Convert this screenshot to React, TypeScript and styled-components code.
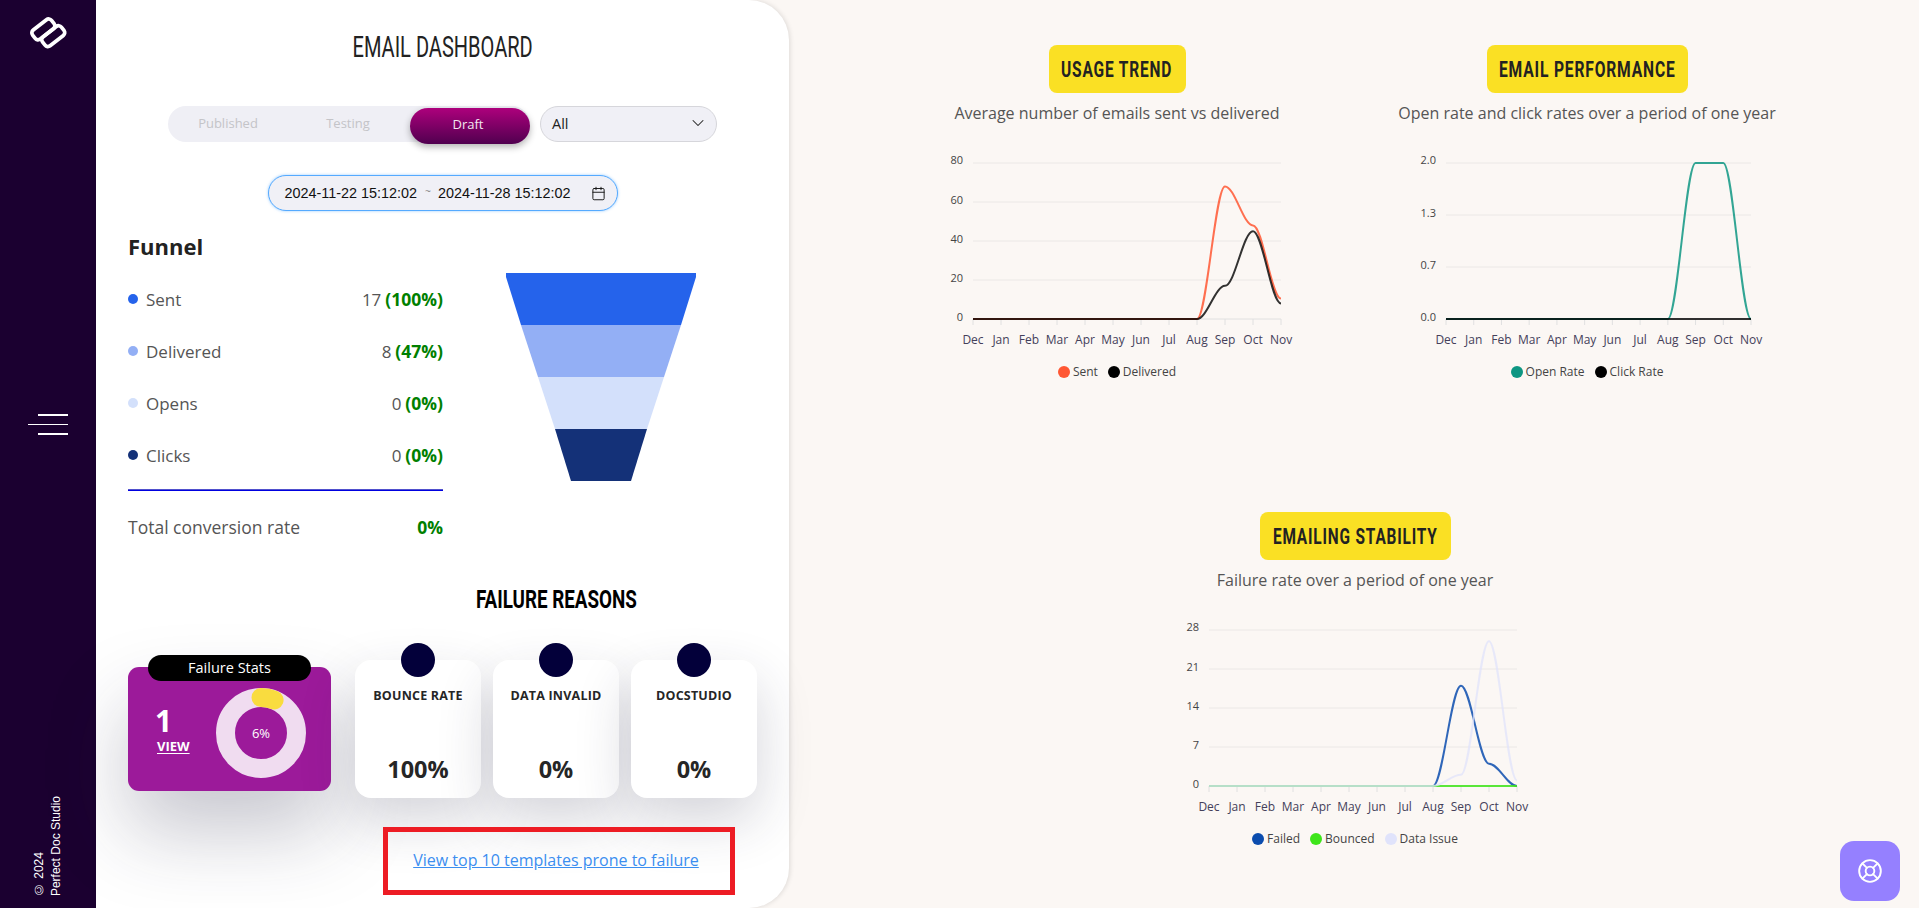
import React, { useLayoutEffect, useRef, useState } from "react";
import styled, { createGlobalStyle } from "styled-components";
import { ChevronDown, Calendar, LifeBuoy } from "lucide-react";

const Global = createGlobalStyle`
  html, body { margin: 0; padding: 0; height: 908px; overflow: hidden; background: #fbf7f4; }
  body { font-family: "Open Sans", "Noto Sans", sans-serif; color: #222; }
  * { box-sizing: border-box; }
`;

const Page = styled.div`
  display: flex;
  width: 1919px;
  height: 908px;
  overflow: hidden;
`;

const Sidebar = styled.aside`
  width: 96px;
  flex: none;
  background: #1b0030;
  display: flex;
  flex-direction: column;
  align-items: center;
  padding: 9px 0 12px;
`;

const Burger = styled.div`
  margin-top: 357px;
  width: 40px;
  display: flex;
  flex-direction: column;
  align-items: flex-end;
  gap: 8px;
`;

const BurgerBar = styled.span<{ $w: number }>`
  display: block;
  height: 1.5px;
  width: ${(p) => p.$w}px;
  background: #fff;
`;

const Copyright = styled.div`
  margin-top: auto;
  writing-mode: vertical-rl;
  transform: rotate(180deg);
  font: 12px/17px "Liberation Sans", Arial, sans-serif;
  color: #fff;
`;

const Panel = styled.section`
  width: 693px;
  flex: none;
  height: 908px;
  background: #fff;
  border-radius: 0 40px 40px 0;
  box-shadow: 1px 0 5px rgba(0, 0, 0, 0.12);
  padding: 28px 0 0 32px;
  position: relative;
`;

const Title = styled.h1`
  margin: 0 0 0 -32px;
  height: 36px;
  display: flex;
  justify-content: center;
  font: 400 29.5px/38px Roboto, sans-serif;
  color: #222;
`;

const FitSpan = styled.span`
  display: inline-block;
  flex: none;
  white-space: nowrap;
  transform-origin: center;
`;

/* Stands in for the condensed display face of the original: the text keeps its
   natural metrics and is narrowed to the width measured in the reference. */
function Condensed({ width, children }: { width: number; children: string }) {
  const ref = useRef<HTMLSpanElement>(null);
  const [scale, setScale] = useState(1);
  useLayoutEffect(() => {
    if (ref.current) setScale(width / ref.current.offsetWidth);
  }, [width]);
  return (
    <FitSpan ref={ref} style={{ transform: `scaleX(${scale})` }}>
      {children}
    </FitSpan>
  );
}

const StatusRow = styled.div`
  display: flex;
  justify-content: center;
  gap: 10px;
  margin: 42px 0 0 -32px;
`;

const Tabs = styled.div`
  display: flex;
  align-items: flex-start;
  height: 36px;
  background: #efeff5;
  border-radius: 18px;
`;

const Tab = styled.div<{ $active?: boolean }>`
  width: 120px;
  height: 36px;
  border-radius: 18px;
  font-size: 13px;
  line-height: 35px;
  text-align: center;
  color: ${(p) => (p.$active ? "#f3e6f0" : "#c4c4c8")};
  ${(p) =>
    p.$active &&
    `
    margin: 2px 0 0 2px;
    padding-right: 4px;
    line-height: 32px;
    font-weight: 500;
    background: linear-gradient(180deg, #ad007c 0%, #50004f 100%);
    box-shadow: 0 3px 7px rgba(0, 0, 0, 0.3);
  `}
`;

const SelectBox = styled.div`
  width: 177px;
  height: 36px;
  border: 1px solid #d6d6db;
  border-radius: 18px;
  background: #f0f0f6;
  padding: 0 8px 2px 11px;
  display: flex;
  align-items: center;
  justify-content: space-between;
  font-size: 14.5px;
  color: #222;
`;

const DatePill = styled.div`
  width: 350px;
  height: 36px;
  margin: 33px 0 0 140px;
  border: 1.5px solid #55aaff;
  border-radius: 18px;
  background: #f0f0f6;
  box-shadow: 0 0 3px rgba(85, 170, 255, 0.6);
  padding: 0 11px 0 15.5px;
  display: flex;
  align-items: center;
  font: 14.4px "Liberation Sans", Arial, sans-serif;
  color: #111;
`;

const Tilde = styled.span`
  color: #888;
  margin: -4px 7px 0 8px;
  font-size: 10px;
`;

const DateIcon = styled(Calendar)`
  margin-left: auto;
`;

const FunnelSection = styled.div`
  display: flex;
  gap: 56px;
  margin-top: 21px;
`;

const FunnelStats = styled.div`
  width: 315px;
`;

const Heading = styled.h2`
  margin: 0 0 13px;
  font: 700 22px/28px "Open Sans", sans-serif;
  color: #222;
`;

const StatRow = styled.div`
  height: 52px;
  display: flex;
  align-items: center;
  font-size: 17px;
  color: #555;
`;

const Dot = styled.span<{ $c: string }>`
  width: 10px;
  height: 10px;
  border-radius: 50%;
  background: ${(p) => p.$c};
  margin-right: 8px;
`;

const Count = styled.span`
  margin-left: auto;
  margin-right: 4px;
`;

const Pct = styled.b`
  color: #008000;
  font-size: 17.5px;
  font-weight: 700;
`;

const Divider = styled.hr`
  margin: 8px 0 0;
  border: 0;
  height: 2px;
  background: linear-gradient(180deg, #8a8ac0 0%, #0000e0 60%);
`;

const TotalRow = styled.div`
  margin-top: 24px;
  display: flex;
  justify-content: space-between;
  font-size: 17.5px;
  line-height: 24px;
  color: #555;
`;

const FunnelChart = styled.svg`
  margin-top: 41px;
  flex: none;
`;

const FailureGrid = styled.div`
  display: grid;
  grid-template-columns: 203px 402px;
  column-gap: 24px;
  margin-top: 45px;
`;

const FailureTitle = styled.h2`
  grid-column: 2;
  margin: 0 0 44px;
  height: 32px;
  display: flex;
  justify-content: center;
  font: 700 26.5px/30px Roboto, sans-serif;
  color: #000;
`;

const StatsCard = styled.div`
  grid-column: 1;
  grid-row: 2;
  position: relative;
  margin-top: 7px;
  height: 124px;
  border-radius: 11px;
  background: #9c1a9a;
  box-shadow: 0 40px 80px rgba(40, 40, 70, 0.26);
  display: flex;
  align-items: center;
  justify-content: space-between;
  padding: 8px 20px 0 29px;
  color: #fff;
`;

const StatsPill = styled.div`
  position: absolute;
  top: -12px;
  left: 20px;
  width: 163px;
  height: 26px;
  border-radius: 13px;
  background: #000;
  font-size: 14.5px;
  line-height: 26px;
  text-align: center;
`;

const StatsLeft = styled.div`
  display: flex;
  flex-direction: column;
  margin-top: -6px;
`;

const StatsNumber = styled.span`
  font-size: 30px;
  line-height: 30px;
  font-weight: 700;
  margin: 0 0 2px -2px;
`;

const ViewLink = styled.a`
  font-size: 13px;
  line-height: 17px;
  font-weight: 700;
  color: #fff;
  text-decoration: underline;
  text-underline-offset: 2px;
`;

const Reasons = styled.div`
  grid-column: 2;
  grid-row: 2;
  display: flex;
  gap: 12px;
`;

const ReasonCard = styled.div`
  position: relative;
  width: 126px;
  height: 138px;
  border-radius: 16px;
  background: #fff;
  box-shadow: 0 22px 55px rgba(40, 40, 70, 0.2);
  display: flex;
  flex-direction: column;
  align-items: center;
  justify-content: space-between;
  padding: 27px 0 13px;
  color: #262626;
`;

const ReasonDot = styled.span`
  position: absolute;
  top: -17px;
  left: 46px;
  width: 34px;
  height: 34px;
  border-radius: 50%;
  background: #03003a;
`;

const ReasonName = styled.span`
  font-size: 12.5px;
  line-height: 18px;
  font-weight: 700;
  letter-spacing: 0.2px;
`;

const ReasonValue = styled.span`
  font-size: 23.5px;
  line-height: 32px;
  font-weight: 700;
`;

const AnnotatedLink = styled.div`
  width: 352px;
  height: 68px;
  margin: 29px 0 0 255px;
  border: 5px solid #ed1c24;
  display: flex;
  align-items: center;
  justify-content: center;
  padding: 0 6px 2px 0;
  position: relative;
`;

const TemplateLink = styled.a`
  font-size: 16px;
  color: #3b8ef0;
  text-decoration: underline;
`;

const Charts = styled.main`
  flex: 1;
  display: grid;
  grid-template-columns: 470px 470px;
  grid-auto-rows: 467px;
  padding: 45px 0 0 93px;
`;

const ChartBlock = styled.div<{ $wide?: boolean }>`
  width: 470px;
  display: flex;
  flex-direction: column;
  align-items: center;
  ${(p) => p.$wide && `grid-column: 1 / -1; justify-self: center; margin-left: 6px;`}
`;

const Badge = styled.div<{ $w: number }>`
  height: 48px;
  width: ${(p) => p.$w}px;
  display: flex;
  justify-content: center;
  border-radius: 8px;
  background: #fae024;
  font: 700 22.5px/48px Roboto, sans-serif;
  letter-spacing: 1.2px;
  color: #222;
`;

const Subtitle = styled.p`
  margin: 9px 0 26px;
  font-size: 16px;
  line-height: 22px;
  color: #555;
`;

const ChartSvg = styled.svg`
  display: block;
  flex: none;
`;

const Legend = styled.div`
  margin-top: 11px;
  display: flex;
  gap: 10px;
  font-size: 12px;
  line-height: 18px;
  color: #444;
`;

const LegendItem = styled.span`
  display: flex;
  align-items: center;
  gap: 3px;
`;

const LegendDot = styled.span<{ $c: string }>`
  width: 12px;
  height: 12px;
  border-radius: 50%;
  background: ${(p) => p.$c};
`;

const HelpButton = styled.button`
  position: fixed;
  left: 1840px;
  top: 841px;
  width: 60px;
  height: 60px;
  border: 0;
  border-radius: 14px;
  background: #9580ff;
  display: flex;
  align-items: center;
  justify-content: center;
  color: #fff;
`;

const MONTHS = ["Dec", "Jan", "Feb", "Mar", "Apr", "May", "Jun", "Jul", "Aug", "Sep", "Oct", "Nov"];
const PLOT_TOP = 13;
const PLOT_BOTTOM = 169;

type Series = { name: string; color: string; lineOpacity?: number; data: number[] };
type ChartDef = {
  title: string;
  badgeWidth: number;
  textWidth: number;
  subtitle: string;
  left: number;
  width: number;
  max: number;
  ticks: string[];
  series: Series[];
  wide?: boolean;
};

const zeros = (n: number) => Array.from({ length: n }, () => 0);

const CHARTS: ChartDef[] = [
  {
    title: "USAGE TREND",
    badgeWidth: 137,
    textWidth: 111,
    subtitle: "Average number of emails sent vs delivered",
    left: 91,
    width: 308,
    max: 80,
    ticks: ["80", "60", "40", "20", "0"],
    series: [
      { name: "Sent", color: "#ff5733", lineOpacity: 0.85, data: [...zeros(9), 68, 48, 10.5] },
      { name: "Delivered", color: "#000000", lineOpacity: 0.8, data: [...zeros(9), 17, 45, 8] },
    ],
  },
  {
    title: "EMAIL PERFORMANCE",
    badgeWidth: 201,
    textWidth: 177,
    subtitle: "Open rate and click rates over a period of one year",
    left: 94,
    width: 305,
    max: 2,
    ticks: ["2.0", "1.3", "0.7", "0.0"],
    series: [
      { name: "Open Rate", color: "#0e9682", lineOpacity: 0.85, data: [...zeros(9), 2, 2, 0] },
      { name: "Click Rate", color: "#000000", lineOpacity: 0.8, data: zeros(12) },
    ],
  },
  {
    title: "EMAILING STABILITY",
    badgeWidth: 191,
    textWidth: 165,
    subtitle: "Failure rate over a period of one year",
    left: 89,
    width: 308,
    max: 28,
    ticks: ["28", "21", "14", "7", "0"],
    wide: true,
    series: [
      { name: "Failed", color: "#0b4cae", lineOpacity: 0.85, data: [...zeros(9), 18, 4, 0] },
      { name: "Bounced", color: "#3ee51a", lineOpacity: 0.85, data: zeros(12) },
      { name: "Data Issue", color: "#e0e3fb", lineOpacity: 0.75, data: [...zeros(9), 2, 26, 1] },
    ],
  },
];

function smoothPath(data: number[], left: number, width: number, max: number) {
  const step = width / (data.length - 1);
  const h = PLOT_BOTTOM - PLOT_TOP;
  const px = (i: number) => left + i * step;
  const py = (v: number) => PLOT_BOTTOM - (v / max) * h;
  let d = `M ${px(0)} ${py(data[0])}`;
  for (let i = 1; i < data.length; i++) {
    const c = step * 0.35;
    d += ` C ${px(i - 1) + c} ${py(data[i - 1])}, ${px(i) - c} ${py(data[i])}, ${px(i)} ${py(data[i])}`;
  }
  return d;
}

function LineChart({ def }: { def: ChartDef }) {
  const { left, width, max, ticks, series } = def;
  const step = width / 11;
  const rowGap = (PLOT_BOTTOM - PLOT_TOP) / (ticks.length - 1);
  return (
    <ChartSvg width={470} height={202} viewBox="0 0 470 202">
      {ticks.map((t, i) => {
        const y = PLOT_TOP + i * rowGap;
        return (
          <g key={t}>
            <line x1={left} x2={left + width} y1={y} y2={y} stroke={i === ticks.length - 1 ? "#e0e0e0" : "#ebe8e6"} />
            <text x={left - 10} y={i === 0 ? y + 1 : y + 2} textAnchor="end" fontSize="11" fontFamily="Open Sans" fill="#444">
              {t}
            </text>
          </g>
        );
      })}
      {MONTHS.map((m, i) => (
        <g key={m}>
          <line
            x1={left + i * step}
            x2={left + i * step}
            y1={PLOT_BOTTOM}
            y2={PLOT_BOTTOM + 6}
            stroke="#e0e0e0"
          />
          <text
            x={left + i * step}
            y={194}
            textAnchor="middle"
            fontSize="12"
            fontFamily="Open Sans"
            fill="#44405a"
          >
            {m}
          </text>
        </g>
      ))}
      {series.map((s) => (
        <path
          key={s.name}
          d={smoothPath(s.data, left, width, max)}
          fill="none"
          stroke={s.color}
          strokeOpacity={s.lineOpacity ?? 1}
          strokeWidth={2}
        />
      ))}
    </ChartSvg>
  );
}

const STATS = [
  { name: "Sent", color: "#2563eb", count: "17", pct: "(100%)" },
  { name: "Delivered", color: "#93aff5", count: "8", pct: "(47%)" },
  { name: "Opens", color: "#d3e0fb", count: "0", pct: "(0%)" },
  { name: "Clicks", color: "#143178", count: "0", pct: "(0%)" },
];

const REASONS = [
  { name: "BOUNCE RATE", value: "100%" },
  { name: "DATA INVALID", value: "0%" },
  { name: "DOCSTUDIO", value: "0%" },
];

function Logo() {
  return (
    <svg width="48" height="48" viewBox="0 0 40 40" fill="none" stroke="#fff" strokeWidth="3.1">
      <g transform="rotate(-38 20 20)">
        <rect x="8.8" y="10.5" width="20" height="9.5" rx="3" />
        <rect x="11.8" y="20" width="20" height="9.5" rx="3" />
      </g>
    </svg>
  );
}

function Donut() {
  const r = 35.5;
  const a = (21.6 * Math.PI) / 180;
  return (
    <svg width="100" height="100" viewBox="0 0 100 100">
      <circle cx="50" cy="50" r={r} fill="none" stroke="#f0dcf0" strokeWidth="19" />
      <path
        d={`M 50 ${50 - r} A ${r} ${r} 0 0 1 ${50 + r * Math.sin(a)} ${50 - r * Math.cos(a)}`}
        fill="none"
        stroke="#f9dc3f"
        strokeWidth="19"
        strokeLinecap="round"
      />
      <text x="50" y="54.5" textAnchor="middle" fontSize="13" fontFamily="Open Sans" fontWeight="500" fill="#fff">
        6%
      </text>
    </svg>
  );
}

function FunnelGraphic() {
  const c = 102;
  const bands = [
    { top: 95, bottom: 80, color: "#2563eb" },
    { top: 80, bottom: 63, color: "#93aff5" },
    { top: 63, bottom: 46, color: "#d3e0fb" },
    { top: 46, bottom: 30, color: "#143178" },
  ];
  return (
    <FunnelChart width="204" height="208" viewBox="0 0 204 208">
      {bands.map((b, i) => (
        <polygon
          key={b.color}
          points={`${c - b.top},${i * 52 + (i === 0 ? 4 : 0)} ${i === 0 ? `${c - b.top},0 ${c + b.top},0 ` : `${c + b.top},${i * 52} `}${
            i === 0 ? `${c + b.top},4 ` : ""
          }${c + b.bottom},${(i + 1) * 52} ${c - b.bottom},${(i + 1) * 52}`}
          fill={b.color}
        />
      ))}
    </FunnelChart>
  );
}

export default function App() {
  return (
    <Page>
      <Global />
      <Sidebar>
        <Logo />
        <Burger>
          <BurgerBar $w={30} />
          <BurgerBar $w={40} />
          <BurgerBar $w={30} />
        </Burger>
        <Copyright>
          © 2024
          <br />
          Perfect Doc Studio
        </Copyright>
      </Sidebar>

      <Panel>
        <Title>
          <Condensed width={180}>EMAIL DASHBOARD</Condensed>
        </Title>
        <StatusRow>
          <Tabs>
            <Tab>Published</Tab>
            <Tab>Testing</Tab>
            <Tab $active>Draft</Tab>
          </Tabs>
          <SelectBox>
            All
            <ChevronDown size={20} strokeWidth={1.25} />
          </SelectBox>
        </StatusRow>
        <DatePill>
          2024-11-22 15:12:02
          <Tilde>~</Tilde>
          2024-11-28 15:12:02
          <DateIcon size={15} strokeWidth={1.5} />
        </DatePill>

        <FunnelSection>
          <FunnelStats>
            <Heading>Funnel</Heading>
            {STATS.map((s) => (
              <StatRow key={s.name}>
                <Dot $c={s.color} />
                {s.name}
                <Count>{s.count}</Count>
                <Pct>{s.pct}</Pct>
              </StatRow>
            ))}
            <Divider />
            <TotalRow>
              Total conversion rate
              <Pct>0%</Pct>
            </TotalRow>
          </FunnelStats>
          <FunnelGraphic />
        </FunnelSection>

        <FailureGrid>
          <FailureTitle>
            <Condensed width={161}>FAILURE REASONS</Condensed>
          </FailureTitle>
          <StatsCard>
            <StatsPill>Failure Stats</StatsPill>
            <StatsLeft>
              <StatsNumber>1</StatsNumber>
              <ViewLink>VIEW</ViewLink>
            </StatsLeft>
            <Donut />
          </StatsCard>
          <Reasons>
            {REASONS.map((r) => (
              <ReasonCard key={r.name}>
                <ReasonDot />
                <ReasonName>{r.name}</ReasonName>
                <ReasonValue>{r.value}</ReasonValue>
              </ReasonCard>
            ))}
          </Reasons>
        </FailureGrid>

        <AnnotatedLink>
          <TemplateLink>View top 10 templates prone to failure</TemplateLink>
        </AnnotatedLink>
      </Panel>

      <Charts>
        {CHARTS.map((c) => (
          <ChartBlock key={c.title} $wide={c.wide}>
            <Badge $w={c.badgeWidth}>
              <Condensed width={c.textWidth}>{c.title}</Condensed>
            </Badge>
            <Subtitle>{c.subtitle}</Subtitle>
            <LineChart def={c} />
            <Legend>
              {c.series.map((s) => (
                <LegendItem key={s.name}>
                  <LegendDot $c={s.color} />
                  {s.name}
                </LegendItem>
              ))}
            </Legend>
          </ChartBlock>
        ))}
      </Charts>

      <HelpButton aria-label="Help">
        <LifeBuoy size={26} strokeWidth={1.75} />
      </HelpButton>
    </Page>
  );
}
